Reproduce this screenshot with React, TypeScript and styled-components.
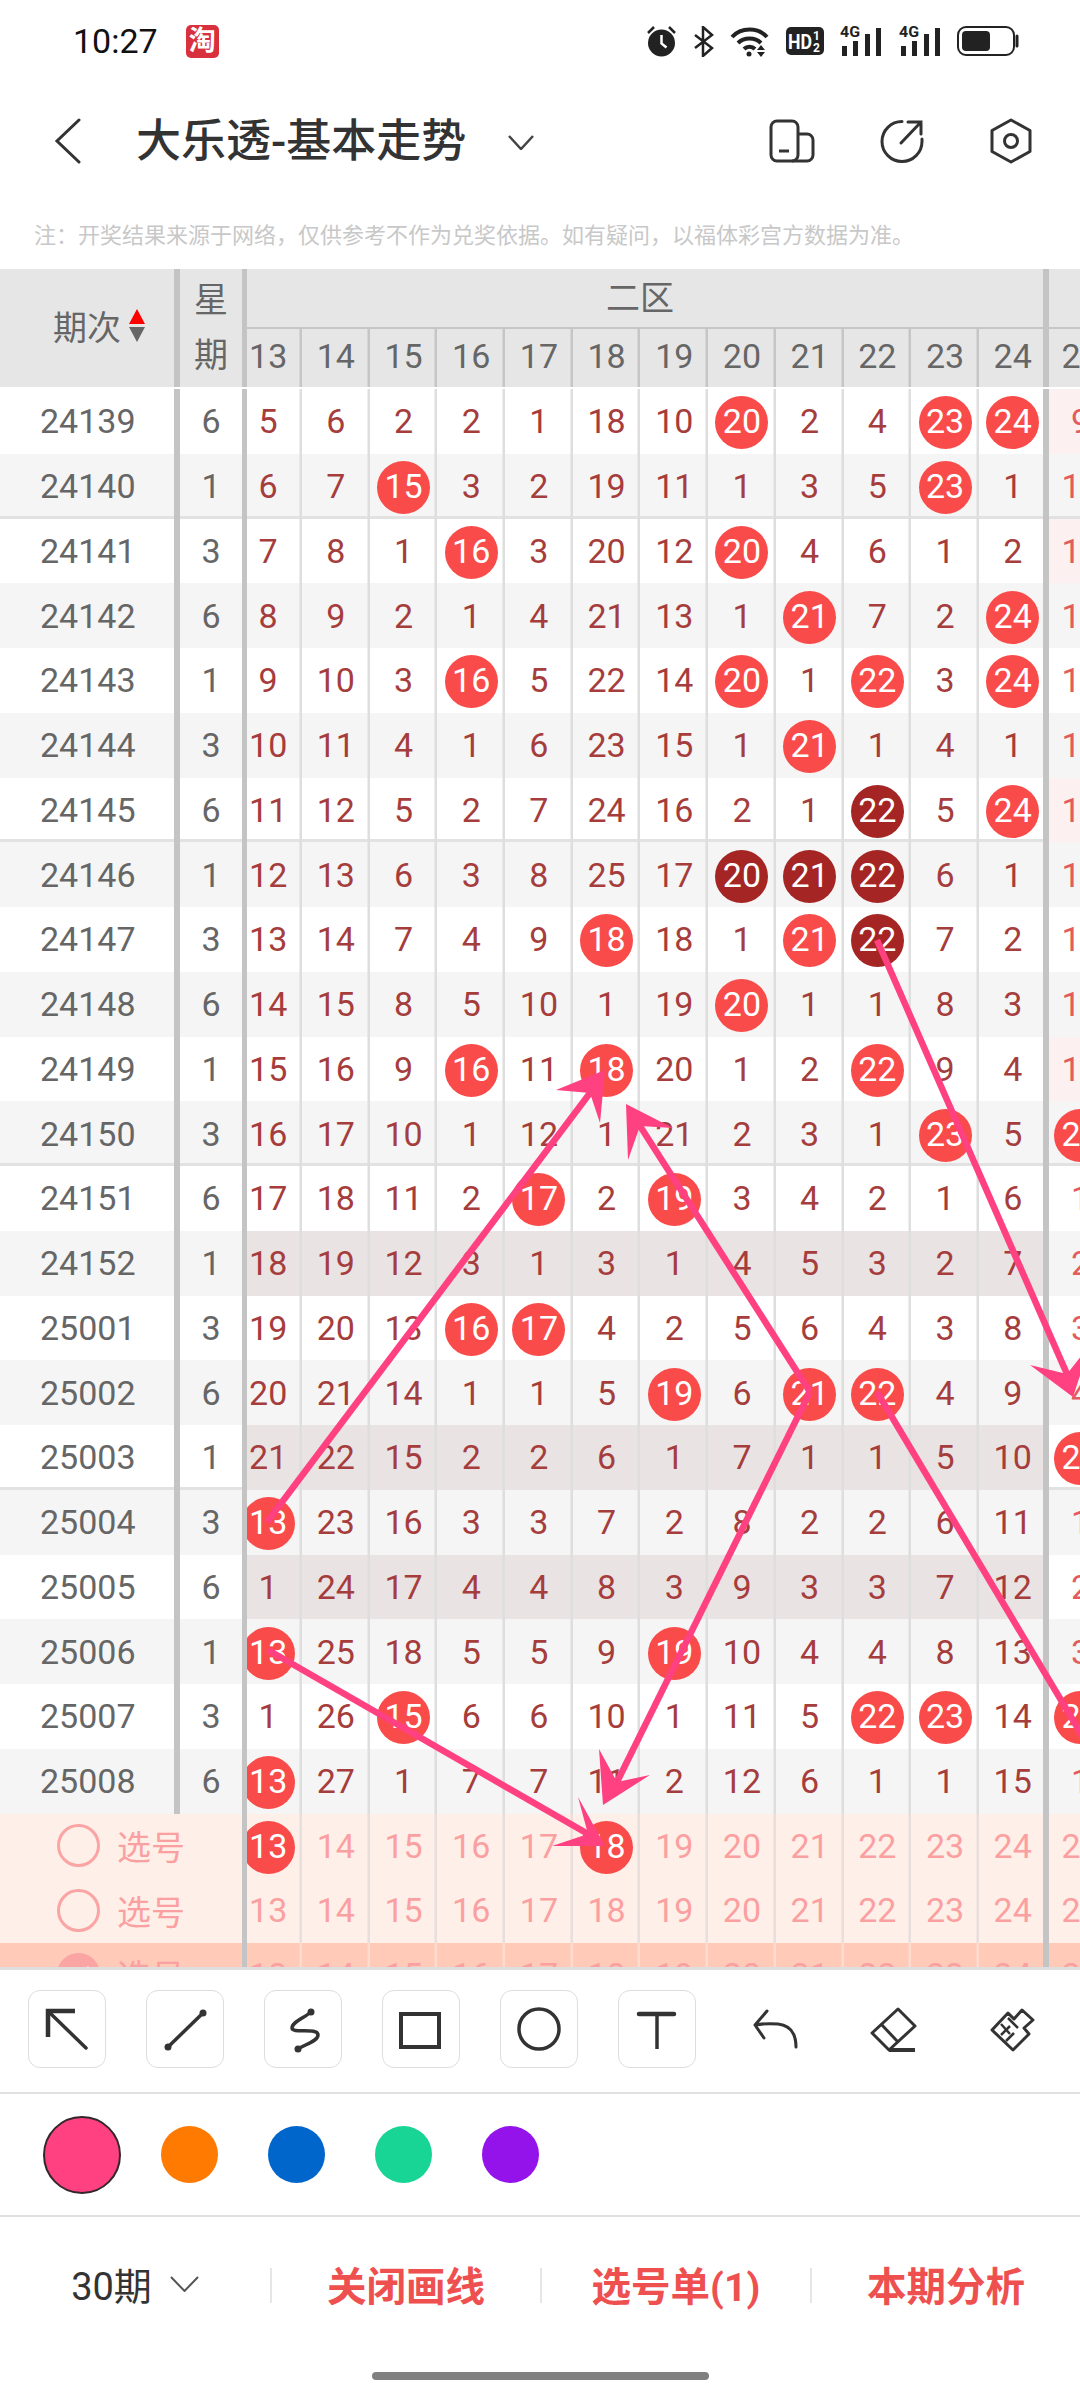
import React from 'react';
import styled, { createGlobalStyle } from 'styled-components';

const GlobalStyle = createGlobalStyle`
  html, body {
    margin: 0;
    padding: 0;
    background: #fff;
  }
  * {
    box-sizing: border-box;
  }
`;

const Page = styled.div`
  position: relative;
  width: 1080px;
  height: 2400px;
  overflow: hidden;
  background: #fff;
  font-family: Roboto, 'Noto Sans CJK SC', sans-serif;
`;

const StatusBar = styled.div`
  display: flex;
  align-items: center;
  justify-content: space-between;
  height: 82px;
  padding: 0 61px 0 73px;
`;

const StatusLeft = styled.div`
  display: flex;
  align-items: center;
  gap: 28px;
`;

const Clock = styled.span`
  font-size: 34px;
  line-height: 40px;
  color: #111;
`;

const AppBadge = styled.span`
  display: flex;
  align-items: center;
  justify-content: center;
  width: 33px;
  height: 33px;
  border-radius: 5px;
  background: #d8303c;
  color: #fff;
  font-size: 27px;
  font-weight: 700;
  line-height: 1;
`;

const StatusRight = styled.div`
  display: flex;
  align-items: center;
  gap: 16.5px;
`;

const TitleBar = styled.div`
  display: flex;
  align-items: center;
  height: 118px;
  padding: 0 47px 0 54px;
  svg {
    display: block;
  }
`;

const Title = styled.h1`
  margin: 2px 0 0 55px;
  font-size: 45px;
  font-weight: 500;
  line-height: 60px;
  color: #333;
  white-space: nowrap;
`;

const TitleChevron = styled.div`
  margin-left: 42px;
  margin-top: 2px;
`;

const TitleActions = styled.div`
  display: flex;
  align-items: center;
  gap: 64px;
  margin-left: auto;
`;

const Note = styled.div`
  height: 69px;
  padding: 0 0 4px 34px;
  display: flex;
  align-items: center;
  font-size: 22px;
  color: #c8c8c8;
  white-space: nowrap;
`;

const Table = styled.div`
  height: 1698px;
  overflow: hidden;
  font-size: 34px;
`;

const HeadRow = styled.div`
  display: flex;
  height: 118px;
  margin-bottom: 2px;
  background: #e6e6e6;
  color: #666;
`;

const PeriodHead = styled.div`
  display: flex;
  align-items: center;
  flex: none;
  width: 174px;
  padding: 0 0 6px 53px;
  gap: 8px;
`;

const SortMark = styled.div`
  display: flex;
  flex-direction: column;
  gap: 3px;
`;

const SortArrow = styled.span<{ $down?: boolean }>`
  display: block;
  width: 0;
  height: 0;
  border-left: 8.5px solid transparent;
  border-right: 8.5px solid transparent;
  ${(p) =>
    p.$down
      ? 'border-top: 15px solid #666;'
      : 'border-bottom: 15px solid #f00;'}
`;

const WeekHead = styled.div`
  display: flex;
  flex: none;
  flex-direction: column;
  align-items: center;
  justify-content: space-between;
  width: 62px;
  padding: 14px 0 15px;
  font-size: 34px;
  line-height: 34px;
`;

const Sep = styled.div<{ $w: number }>`
  flex: none;
  position: relative;
  z-index: 1;
  width: ${(p) => p.$w}px;
  background: #c4c4c4;
`;

const ZoneHead = styled.div`
  display: flex;
  flex: none;
  flex-direction: column;
  width: 796px;
`;

const ZoneTitle = styled.div`
  display: flex;
  justify-content: center;
  align-items: center;
  flex: none;
  height: 60px;
  padding: 0 10px 6px 0;
  border-bottom: 2px solid #c6c6c6;
`;

const ZoneNumbers = styled.div`
  display: flex;
  flex: 1;
`;

const HeadNumInner = styled.div<{ $pos: 'first' | 'mid' | 'last' }>`
  display: flex;
  align-items: center;
  justify-content: center;
  flex: none;
  width: 67.7px;
  height: 100%;
  padding-bottom: 5px;
  margin-left: ${(p) => (p.$pos === 'first' ? -12.7 : 0)}px;
  margin-right: ${(p) => (p.$pos === 'last' ? -3.7 : 0)}px;
`;

const LastHead = styled.div`
  display: flex;
  flex: none;
  flex-direction: column;
  width: 63px;
`;

const Row = styled.div<{ $even: boolean; $rule: boolean }>`
  display: flex;
  height: 64.75px;
  background: ${(p) => (p.$even ? '#f5f5f5' : '#fff')};
  box-shadow: ${(p) => (p.$rule ? 'inset 0 -3px 0 #e2e2e2' : 'none')};
  color: #666;
`;

const PeriodCell = styled.div`
  display: flex;
  align-items: center;
  flex: none;
  width: 174px;
  padding-left: 40px;
`;

const WeekCell = styled.div`
  display: flex;
  align-items: center;
  justify-content: center;
  flex: none;
  width: 62px;
`;

const Zone = styled.div<{ $tint?: boolean; $faded?: boolean }>`
  display: flex;
  flex: none;
  width: 796px;
  background: ${(p) => (p.$tint ? '#eae3e4' : 'transparent')};
  color: ${(p) => (p.$faded ? '#fba0a0' : '#a63d3d')};
`;

const NumCell = styled.div<{ $pos: 'first' | 'mid' | 'last'; $line?: string }>`
  display: flex;
  align-items: center;
  justify-content: center;
  flex: none;
  overflow: hidden;
  width: ${(p) => (p.$pos === 'first' ? 55 : p.$pos === 'last' ? 64 : 67.7)}px;
  box-shadow: ${(p) =>
    p.$pos === 'last' ? 'none' : `inset -2.5px 0 0 ${p.$line || '#dedede'}`};
`;

const NumInner = styled.div<{ $pos: 'first' | 'mid' | 'last' }>`
  display: flex;
  align-items: center;
  justify-content: center;
  flex: none;
  width: 67.7px;
  height: 100%;
  margin-left: ${(p) => (p.$pos === 'first' ? -12.7 : 0)}px;
  margin-right: ${(p) => (p.$pos === 'last' ? -3.7 : 0)}px;
`;

const LastCell = styled.div<{ $pink?: boolean; $color?: string; $lift?: boolean }>`
  display: flex;
  align-items: center;
  justify-content: center;
  flex: none;
  width: 63px;
  height: 100%;
  padding-bottom: ${(p) => (p.$lift ? 5 : 0)}px;
  background: ${(p) => (p.$pink ? '#fdf0f0' : 'transparent')};
  color: ${(p) => p.$color || '#e25c5c'};
`;

const Ball = styled.span<{ $dark?: boolean }>`
  display: flex;
  align-items: center;
  justify-content: center;
  flex: none;
  width: 53px;
  height: 53px;
  margin-top: 3px;
  border-radius: 50%;
  background: ${(p) => (p.$dark ? '#a52525' : '#fa4b4b')};
  color: #fff;
  line-height: 1;
  padding-bottom: 3px;
`;

const PickRow = styled.div<{ $on?: boolean }>`
  display: flex;
  height: 64.5px;
  background: ${(p) => (p.$on ? '#ffcbb8' : '#ffefe9')};
  color: #fba0a0;
`;

const PickLabel = styled.div`
  display: flex;
  align-items: center;
  flex: none;
  width: 242px;
  padding-left: 57px;
  gap: 17px;
`;

const Radio = styled.span<{ $on?: boolean }>`
  display: flex;
  align-items: center;
  justify-content: center;
  flex: none;
  width: 43px;
  height: 43px;
  border-radius: 50%;
  border: 3px solid #fba4a4;
  background: ${(p) => (p.$on ? '#fba4a4' : 'transparent')};
`;

const DrawLayer = styled.svg`
  position: absolute;
  left: 0;
  top: 0;
  width: 1080px;
  height: 2400px;
  z-index: 2;
  pointer-events: none;
`;

const Toolbar = styled.div`
  display: flex;
  gap: 40px;
  height: 127px;
  padding: 20px 0 0 28px;
  border-top: 3px solid #dedede;
  border-bottom: 2px solid #e0e0e0;
`;

const ToolButton = styled.button<{ $plain?: boolean }>`
  flex: none;
  width: 78px;
  height: 78px;
  padding: 0;
  background: #fff;
  border: ${(p) => (p.$plain ? 'none' : '1.5px solid #ddd')};
  border-radius: 12px;
  svg {
    display: block;
    margin: ${(p) => (p.$plain ? '0' : '-1.5px')};
  }
`;

const ColorRow = styled.div`
  display: flex;
  align-items: center;
  height: 123px;
  padding-left: 43px;
  border-bottom: 2px solid #e0e0e0;
`;

const Swatch = styled.span<{ $color: string; $active?: boolean }>`
  flex: none;
  width: ${(p) => (p.$active ? 78 : 57)}px;
  height: ${(p) => (p.$active ? 78 : 57)}px;
  margin-right: ${(p) => (p.$active ? 40 : 50)}px;
  border-radius: 50%;
  background: ${(p) => p.$color};
  border: ${(p) => (p.$active ? '2px solid #33272d' : 'none')};
`;

const Footer = styled.div`
  display: flex;
  align-items: center;
  height: 136px;
`;

const FooterItem = styled.div<{ $first?: boolean }>`
  display: flex;
  align-items: center;
  justify-content: center;
  flex: none;
  gap: 18px;
  width: 270px;
  height: 35px;
  padding-bottom: 3px;
  font-size: ${(p) => (p.$first ? 38 : 39.5)}px;
  font-weight: ${(p) => (p.$first ? 400 : 700)};
  color: ${(p) => (p.$first ? '#333' : '#ee5050')};
  border-left: ${(p) => (p.$first ? 'none' : '2px solid #e6e6e6')};
  white-space: nowrap;
`;

const HomeBar = styled.div`
  width: 337px;
  height: 8px;
  margin: 19px auto 0;
  border-radius: 4px;
  background: #808080;
`;

const rows: { id: string; week: string; nums: string; tint?: boolean; rule?: boolean; pink?: boolean }[] = [
  { id: '24139', week: '6', nums: '5 6 2 2 1 18 10 *20 2 4 *23 *24 9', pink: true },
  { id: '24140', week: '1', nums: '6 7 *15 3 2 19 11 1 3 5 *23 1 10', rule: true },
  { id: '24141', week: '3', nums: '7 8 1 *16 3 20 12 *20 4 6 1 2 11', pink: true },
  { id: '24142', week: '6', nums: '8 9 2 1 4 21 13 1 *21 7 2 *24 12' },
  { id: '24143', week: '1', nums: '9 10 3 *16 5 22 14 *20 1 *22 3 *24 13' },
  { id: '24144', week: '3', nums: '10 11 4 1 6 23 15 1 *21 1 4 1 14' },
  { id: '24145', week: '6', nums: '11 12 5 2 7 24 16 2 1 #22 5 *24 15', rule: true, pink: true },
  { id: '24146', week: '1', nums: '12 13 6 3 8 25 17 #20 #21 #22 6 1 16' },
  { id: '24147', week: '3', nums: '13 14 7 4 9 *18 18 1 *21 #22 7 2 17' },
  { id: '24148', week: '6', nums: '14 15 8 5 10 1 19 *20 1 1 8 3 18' },
  { id: '24149', week: '1', nums: '15 16 9 *16 11 *18 20 1 2 *22 9 4 19', pink: true },
  { id: '24150', week: '3', nums: '16 17 10 1 12 1 21 2 3 1 *23 5 *25', rule: true },
  { id: '24151', week: '6', nums: '17 18 11 2 *17 2 *19 3 4 2 1 6 1' },
  { id: '24152', week: '1', nums: '18 19 12 3 1 3 1 4 5 3 2 7 2', tint: true },
  { id: '25001', week: '3', nums: '19 20 13 *16 *17 4 2 5 6 4 3 8 3' },
  { id: '25002', week: '6', nums: '20 21 14 1 1 5 *19 6 *21 *22 4 9 4' },
  { id: '25003', week: '1', nums: '21 22 15 2 2 6 1 7 1 1 5 10 *25', tint: true, rule: true },
  { id: '25004', week: '3', nums: '*13 23 16 3 3 7 2 8 2 2 6 11 1' },
  { id: '25005', week: '6', nums: '1 24 17 4 4 8 3 9 3 3 7 12 2', tint: true },
  { id: '25006', week: '1', nums: '*13 25 18 5 5 9 *19 10 4 4 8 13 3' },
  { id: '25007', week: '3', nums: '1 26 *15 6 6 10 1 11 5 *22 *23 14 *25' },
  { id: '25008', week: '6', nums: '*13 27 1 7 7 11 2 12 6 1 1 15 1' },
];

const arrows = [
  { from: [267, 1522], notch: [590, 1093], tip: [605, 1070], a: [556, 1090], b: [600, 1123] },
  { from: [810, 1392], notch: [640, 1126], tip: [626, 1104], a: [673, 1128], b: [628, 1160] },
  { from: [810, 1392], notch: [617, 1782], tip: [603, 1805], a: [599, 1749], b: [650, 1775] },
  { from: [268, 1650], notch: [588, 1834], tip: [605, 1846], a: [552, 1846], b: [578, 1797] },
  { from: [877, 940], notch: [1067, 1374], tip: [1073, 1397], a: [1030, 1365], b: [1090, 1345] },
];

const posOf = (i: number): 'first' | 'mid' | 'last' => (i === 0 ? 'first' : i === 11 ? 'last' : 'mid');

const renderValue = (v: string) => {
  if (v[0] === '*') return <Ball>{v.slice(1)}</Ball>;
  if (v[0] === '#') return <Ball $dark>{v.slice(1)}</Ball>;
  return v;
};

const AlarmIcon = () => (
  <svg width="29" height="32" viewBox="0 0 29 32">
    <circle cx="14.5" cy="18" r="13.5" fill="#222" />
    <path d="M14.5 10v8.5l5 4" fill="none" stroke="#fff" strokeWidth="2.5" />
    <path d="M1 8l6-6M28 8l-6-6" stroke="#222" strokeWidth="2.5" />
  </svg>
);

const BluetoothIcon = () => (
  <svg width="21" height="31" viewBox="0 0 21 31">
    <path d="M2 9l17 13-9 8V1l9 8L2 22" fill="none" stroke="#222" strokeWidth="2.5" />
  </svg>
);

const WifiIcon = () => (
  <svg width="39" height="31" viewBox="0 0 39 31">
    <path d="M2 11C11 1 28 1 37 11" fill="none" stroke="#222" strokeWidth="4" />
    <path d="M8 17c6-6 17-6 23 0" fill="none" stroke="#222" strokeWidth="4" />
    <path d="M14 23c3-3 8-3 11 0" fill="none" stroke="#222" strokeWidth="4" />
    <circle cx="19" cy="28" r="2.5" fill="#222" />
    <path d="M27 24l4-5 4 5zM27 26h8l-4 5z" fill="#222" />
  </svg>
);

const HdIcon = () => (
  <svg width="38" height="28" viewBox="0 0 38 28">
    <rect width="38" height="28" rx="5" fill="#222" />
    <text x="2" y="22" fill="#fff" fontFamily="Roboto, sans-serif" fontSize="21" fontWeight="700" textLength="24" lengthAdjust="spacingAndGlyphs">HD</text>
    <text x="27" y="13" fill="#fff" fontFamily="Roboto, sans-serif" fontSize="12" fontWeight="700">1</text>
    <text x="27" y="25" fill="#fff" fontFamily="Roboto, sans-serif" fontSize="12" fontWeight="700">2</text>
  </svg>
);

const SignalIcon = () => (
  <svg width="42" height="30" viewBox="0 0 42 30">
    <text x="0" y="11" fill="#222" fontFamily="Roboto, sans-serif" fontSize="14" fontWeight="700" textLength="20" lengthAdjust="spacingAndGlyphs">4G</text>
    <rect x="2" y="20" width="5" height="10" fill="#222" />
    <rect x="13" y="15" width="5" height="15" fill="#222" />
    <rect x="25" y="8" width="5" height="22" fill="#222" />
    <rect x="36" y="2" width="5" height="28" fill="#222" />
  </svg>
);

const BatteryIcon = () => (
  <svg width="62" height="30" viewBox="0 0 62 30">
    <rect x="1" y="1" width="56" height="28" rx="8" fill="none" stroke="#222" strokeWidth="2" />
    <rect x="5" y="5" width="28" height="20" rx="4" fill="#222" />
    <path d="M60 10v10" stroke="#222" strokeWidth="3" strokeLinecap="round" />
  </svg>
);

const Chevron = ({ w, h, color, sw }: { w: number; h: number; color: string; sw: number }) => (
  <svg width={w} height={h} viewBox={`0 0 ${w} ${h}`} style={{ display: 'block' }}>
    <path d={`M1 1L${w / 2} ${h - 1}L${w - 1} 1`} fill="none" stroke={color} strokeWidth={sw} />
  </svg>
);

const ToolIcon = ({ children }: { children: React.ReactNode }) => (
  <svg width="78" height="78" viewBox="0 0 78 78" fill="none" stroke="#333" strokeWidth="3.5">
    {children}
  </svg>
);

const tools = [
  <>
    <path d="M20 47V21h27" strokeWidth="4.5" />
    <path d="M21 22l37 36" strokeLinecap="round" />
  </>,
  <>
    <path d="M22 57L57 23" />
    <circle cx="22" cy="57" r="3.5" fill="#333" stroke="none" />
    <circle cx="57" cy="23" r="3.5" fill="#333" stroke="none" />
  </>,
  <>
    <path d="M47 22C40 28 28 32 28 38C28 44 54 37 54 45C54 51 42 54 34 59" />
    <circle cx="47" cy="22" r="3.5" fill="#333" stroke="none" />
    <circle cx="34" cy="59" r="3.5" fill="#333" stroke="none" />
  </>,
  <rect x="19" y="24" width="38" height="33" strokeWidth="4" />,
  <circle cx="39" cy="39" r="20" strokeWidth="3.5" />,
  <>
    <path d="M21 24H56" strokeWidth="4.5" strokeLinecap="round" />
    <path d="M39 24V59" />
  </>,
];

const plainTools = [
  <path d="M31 21L19 35L28 48M19 35Q30 33 42 34Q60 36 60 57" strokeWidth="3" strokeLinecap="round" strokeLinejoin="round" />,
  <>
    <path d="M44 19L61 36L35 60L18 43Z" strokeWidth="3" strokeLinejoin="round" />
    <path d="M27 34L44 52" strokeWidth="3" />
    <path d="M35 60H61" strokeWidth="4" />
  </>,
  <>
    <path d="M20 40L36 23L42 29L50 20L61 30L52 38L57 44L41 60Z" strokeWidth="3" strokeLinejoin="round" />
    <path d="M29 34L38 44M36 28L46 38M29 45L38 36M34 51L42 43" strokeWidth="2.5" />
  </>,
];

const colors = ['#ff4081', '#ff7a00', '#0066cc', '#18d596', '#9413ea'];
const headNums = Array.from({ length: 12 }, (_, i) => String(13 + i));
const pickNums = Array.from({ length: 12 }, (_, i) => 13 + i);

export default function App() {
  return (
    <Page>
      <GlobalStyle />
      <StatusBar>
        <StatusLeft>
          <Clock>10:27</Clock>
          <AppBadge>淘</AppBadge>
        </StatusLeft>
        <StatusRight>
          <AlarmIcon />
          <BluetoothIcon />
          <WifiIcon />
          <HdIcon />
          <SignalIcon />
          <SignalIcon />
          <BatteryIcon />
        </StatusRight>
      </StatusBar>

      <TitleBar>
        <svg width="27" height="46" viewBox="0 0 27 46">
          <path d="M25 2L3 23L25 44" fill="none" stroke="#333" strokeWidth="3" strokeLinecap="round" />
        </svg>
        <Title>大乐透-基本走势</Title>
        <TitleChevron>
          <Chevron w={26} h={15} color="#444" sw={2.5} />
        </TitleChevron>
        <TitleActions>
          <svg width="46" height="44" viewBox="0 0 46 44" fill="none" stroke="#333" strokeWidth="3">
            <rect x="2" y="2" width="27" height="40" rx="6" />
            <path d="M29 15h9a6 6 0 0 1 6 6v15a6 6 0 0 1-6 6H23" />
            <path d="M10 32h10" />
          </svg>
          <svg width="46" height="44" viewBox="0 0 46 44" fill="none" stroke="#333" strokeWidth="3" strokeLinecap="round">
            <path d="M23 2.5A20 20 0 1 0 43 22.5V20" />
            <path d="M22 24L42 3M29 3H42V15" />
          </svg>
          <svg width="44" height="46" viewBox="0 0 44 46" fill="none" stroke="#333" strokeWidth="3" strokeLinejoin="round">
            <path d="M22 2L41 12.5V33.5L22 44L3 33.5V12.5Z" />
            <circle cx="22" cy="23" r="6.5" />
          </svg>
        </TitleActions>
      </TitleBar>

      <Note>注：开奖结果来源于网络，仅供参考不作为兑奖依据。如有疑问，以福体彩宫方数据为准。</Note>

      <Table>
        <HeadRow>
          <PeriodHead>
            期次
            <SortMark>
              <SortArrow />
              <SortArrow $down />
            </SortMark>
          </PeriodHead>
          <Sep $w={6} />
          <WeekHead>
            <span>星</span>
            <span>期</span>
          </WeekHead>
          <Sep $w={5} />
          <ZoneHead>
            <ZoneTitle>二区</ZoneTitle>
            <ZoneNumbers>
              {headNums.map((n, i) => (
                <NumCell key={n} $pos={posOf(i)} $line="#c6c6c6">
                  <HeadNumInner $pos={posOf(i)}>{n}</HeadNumInner>
                </NumCell>
              ))}
            </ZoneNumbers>
          </ZoneHead>
          <Sep $w={6} />
          <LastHead>
            <ZoneTitle />
            <ZoneNumbers>
              <LastCell $color="#666" $lift>25</LastCell>
            </ZoneNumbers>
          </LastHead>
        </HeadRow>

        {rows.map((r, idx) => {
          const vals = r.nums.split(' ');
          return (
            <Row key={r.id} $even={idx % 2 === 1} $rule={!!r.rule}>
              <PeriodCell>{r.id}</PeriodCell>
              <Sep $w={6} />
              <WeekCell>{r.week}</WeekCell>
              <Sep $w={5} />
              <Zone $tint={r.tint}>
                {vals.slice(0, 12).map((v, i) => (
                  <NumCell key={i} $pos={posOf(i)}>
                    <NumInner $pos={posOf(i)}>{renderValue(v)}</NumInner>
                  </NumCell>
                ))}
              </Zone>
              <Sep $w={6} />
              <LastCell $pink={r.pink}>{renderValue(vals[12])}</LastCell>
            </Row>
          );
        })}

        {[0, 1, 2].map((p) => (
          <PickRow key={p} $on={p === 2}>
            <PickLabel>
              <Radio $on={p === 2}>
                {p === 2 && (
                  <svg width="26" height="22" viewBox="0 0 26 22">
                    <path d="M3 11l7 8L23 3" fill="none" stroke="#fff" strokeWidth="3" />
                  </svg>
                )}
              </Radio>
              选号
            </PickLabel>
            <Sep $w={5} />
            <Zone $faded>
              {pickNums.map((n, i) => (
                <NumCell key={n} $pos={posOf(i)} $line={p === 2 ? '#ffdccf' : '#e8dedb'}>
                  <NumInner $pos={posOf(i)}>
                    {p === 0 && (n === 13 || n === 18) ? <Ball>{n}</Ball> : n}
                  </NumInner>
                </NumCell>
              ))}
            </Zone>
            <Sep $w={6} />
            <LastCell $color="#fba0a0">25</LastCell>
          </PickRow>
        ))}
      </Table>

      <Toolbar>
        {tools.map((t, i) => (
          <ToolButton key={i}>
            <ToolIcon>{t}</ToolIcon>
          </ToolButton>
        ))}
        {plainTools.map((t, i) => (
          <ToolButton key={i} $plain>
            <ToolIcon>{t}</ToolIcon>
          </ToolButton>
        ))}
      </Toolbar>

      <ColorRow>
        {colors.map((c, i) => (
          <Swatch key={c} $color={c} $active={i === 0} />
        ))}
      </ColorRow>

      <Footer>
        <FooterItem $first>
          <span>30期</span>
          <Chevron w={29} h={16} color="#555" sw={2} />
        </FooterItem>
        <FooterItem>关闭画线</FooterItem>
        <FooterItem>选号单(1)</FooterItem>
        <FooterItem>本期分析</FooterItem>
      </Footer>
      <HomeBar />

      <DrawLayer viewBox="0 0 1080 2400">
        {arrows.map((a, i) => (
          <g key={i}>
            <line x1={a.from[0]} y1={a.from[1]} x2={a.notch[0]} y2={a.notch[1]} stroke="#ff4081" strokeWidth="6.5" />
            <polygon points={[a.tip, a.a, a.notch, a.b].map((pt) => pt.join(',')).join(' ')} fill="#ff4081" />
          </g>
        ))}
        <line x1="877" y1="1392" x2="1095" y2="1757" stroke="#ff4081" strokeWidth="6.5" />
      </DrawLayer>
    </Page>
  );
}
